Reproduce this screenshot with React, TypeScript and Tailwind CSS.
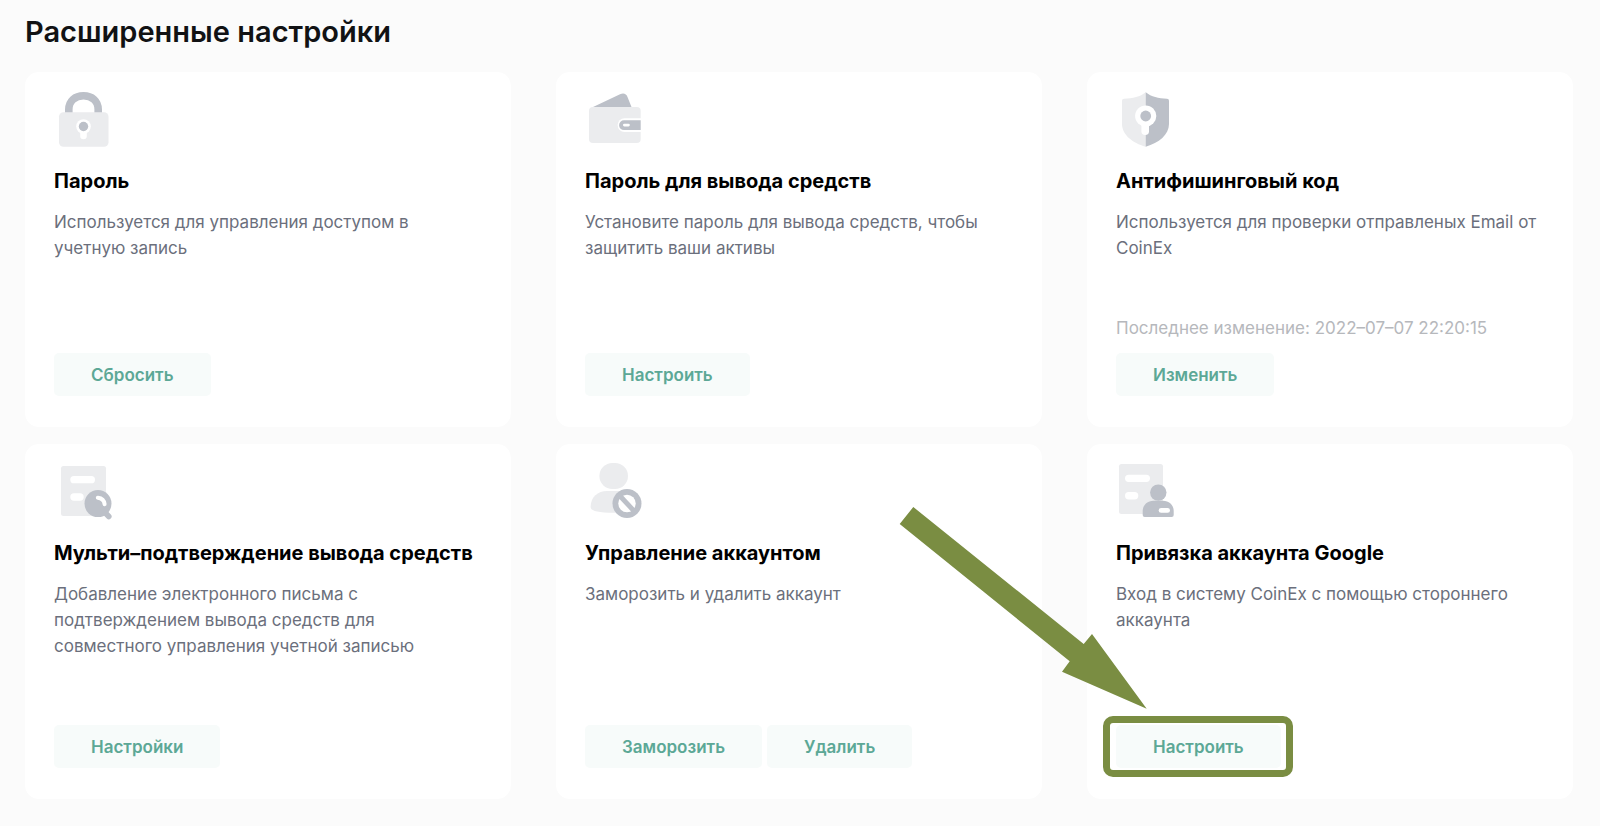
import type { ReactNode } from 'react';

type SettingCard = {
  title: string;
  description: string;
  note?: string;
  icon: ReactNode;
  actions: string[];
  highlighted?: boolean;
};

const DARK = '#bcc0c8';
const LIGHT = '#ebecee';

function Icon({ children }: { children: ReactNode }) {
  return (
    <svg className="size-[60px] shrink-0" viewBox="0 0 60 60" fill="none" aria-hidden="true">
      {children}
    </svg>
  );
}

const LockIcon = (
  <Icon>
    <path d="M14.8 24V19.5C14.8 11 21 5.8 29.5 5.8S44.2 11 44.2 19.5V24" stroke={DARK} strokeWidth="7.6" />
    <rect x="5" y="22.3" width="49.5" height="34.5" rx="4.5" fill={LIGHT} />
    <circle cx="29.5" cy="36.5" r="7.3" fill="#fff" />
    <path d="M29.5 40v6" stroke="#fff" strokeWidth="6.6" strokeLinecap="round" />
    <circle cx="29.5" cy="36.5" r="4.7" fill={DARK} />
  </Icon>
);

const WalletIcon = (
  <Icon>
    <path d="M7 17.5L35 4.3C38.4 2.8 41.4 3.6 42.6 7.2L46.7 17.5Z" fill={DARK} />
    <rect x="4" y="17" width="51.7" height="36" rx="4" fill={LIGHT} />
    <path d="M56 28.2H39.5a6.9 6.9 0 0 0 0 13.8H56Z" fill="#fff" />
    <path d="M55.7 30.3H39a4.9 4.9 0 0 0 0 9.8H55.7Z" fill={DARK} />
    <rect x="38" y="33.8" width="6.8" height="2.6" rx="1.3" fill="#fff" />
  </Icon>
);

const ShieldIcon = (
  <Icon>
    <path d="M29.7 2.3C24 7 17 8.4 8 8.7Q6 8.8 6 10.8V34C6 44.5 16.5 53 29.7 56.7Z" fill={LIGHT} />
    <path d="M29.7 2.3C35.4 7 42.4 8.4 51 8.7Q53 8.8 53 10.8V34C53 44.5 43 53 29.7 56.7Z" fill={DARK} />
    <circle cx="29.7" cy="26" r="10.6" fill="#fff" />
    <path d="M29.2 34v7.2" stroke="#fff" strokeWidth="7.6" strokeLinecap="round" />
    <circle cx="29.7" cy="26" r="5.4" fill={DARK} />
  </Icon>
);

const DocumentSearchIcon = (
  <Icon>
    <rect x="7" y="4" width="45" height="50" rx="2.5" fill={LIGHT} />
    <rect x="16.3" y="14" width="24.7" height="7.3" rx="3.65" fill="#fff" />
    <rect x="16.3" y="31.3" width="13.4" height="7.4" rx="3.7" fill="#fff" />
    <path d="M51 50.5l3.8 4" stroke={DARK} strokeWidth="5.6" strokeLinecap="round" />
    <circle cx="44" cy="41.6" r="13.5" fill={DARK} />
    <path d="M43.8 35.8Q50 36.5 50.6 42.3" stroke="#fff" strokeWidth="4" strokeLinecap="round" />
  </Icon>
);

const UserBlockedIcon = (
  <Icon>
    <rect x="14.4" y="1" width="28.6" height="26" rx="13" fill={LIGHT} />
    <path d="M5.6 45C5.6 35 13 29 22 29H34C43 29 51 35 51 45C51 49 44 50.7 28.5 50.7S5.6 49 5.6 45Z" fill={LIGHT} />
    <circle cx="42" cy="41.5" r="14.5" fill={DARK} />
    <circle cx="42" cy="41.5" r="8.7" fill="#fff" />
    <path d="M35.5 34.5L48.5 48.5" stroke={DARK} strokeWidth="4.8" />
  </Icon>
);

const DocumentUserIcon = (
  <Icon>
    <rect x="3" y="2" width="44" height="50" rx="2.5" fill={LIGHT} />
    <rect x="9" y="12.7" width="25" height="7.3" rx="3.65" fill="#fff" />
    <rect x="9" y="30" width="13.3" height="7.4" rx="3.7" fill="#fff" />
    <circle cx="42.3" cy="30.6" r="8.2" fill={DARK} />
    <path d="M26.7 53V49C26.7 43 31.5 38.7 37.5 38.7H47C53 38.7 57.7 43 57.7 49V53Q57.7 55 55.7 55H28.7Q26.7 55 26.7 53Z" fill={DARK} />
    <rect x="42.7" y="46" width="11.3" height="4.8" rx="2.4" fill="#fff" />
  </Icon>
);

const cards: SettingCard[] = [
  {
    title: 'Пароль',
    description: 'Используется для управления доступом в учетную запись',
    icon: LockIcon,
    actions: ['Сбросить'],
  },
  {
    title: 'Пароль для вывода средств',
    description: 'Установите пароль для вывода средств, чтобы защитить ваши активы',
    icon: WalletIcon,
    actions: ['Настроить'],
  },
  {
    title: 'Антифишинговый код',
    description: 'Используется для проверки отправленых Email от CoinEx',
    note: 'Последнее изменение: 2022–07–07 22:20:15',
    icon: ShieldIcon,
    actions: ['Изменить'],
  },
  {
    title: 'Мульти–подтверждение вывода средств',
    description: 'Добавление электронного письма с подтверждением вывода средств для совместного управления учетной записью',
    icon: DocumentSearchIcon,
    actions: ['Настройки'],
  },
  {
    title: 'Управление аккаунтом',
    description: 'Заморозить и удалить аккаунт',
    icon: UserBlockedIcon,
    actions: ['Заморозить', 'Удалить'],
  },
  {
    title: 'Привязка аккаунта Google',
    description: 'Вход в систему CoinEx с помощью стороннего аккаунта',
    icon: DocumentUserIcon,
    actions: ['Настроить'],
    highlighted: true,
  },
];

function Card({ card }: { card: SettingCard }) {
  return (
    <section className="relative flex min-h-[355px] flex-col rounded-[14px] bg-white px-[29px] pt-[18px] pb-[31px]">
      {card.icon}
      <h2 className="mt-[17px] text-[20px] leading-7 font-bold whitespace-nowrap text-black">{card.title}</h2>
      <p className="mt-3.5 max-w-[430px] text-[17px] leading-[26px] text-[#6b6f7c]">{card.description}</p>

      <div className="mt-auto">
        {card.note && <p className="mb-3 text-[17px] leading-[26px] text-[#b6b8bc]">{card.note}</p>}
        <div className="flex gap-[5px]">
          {card.actions.map((action) => (
            <div key={action} className="relative">
              <button className="block h-[43px] rounded-[5px] bg-[#f7fbfa] px-[37px] pt-0.5 text-[17px] font-semibold text-[#5ca896]">
                {action}
              </button>
              {card.highlighted && (
                <span className="pointer-events-none absolute -top-[9px] -right-3 -bottom-[9px] -left-[13px] rounded-[10px] border-[7px] border-[#7a8d42]" />
              )}
            </div>
          ))}
        </div>
      </div>

      {/* arrow pointing at the button */}
      {card.highlighted && (
        <svg
          className="pointer-events-none absolute top-[63px] left-[-188px] h-[202px] w-[248px]"
          viewBox="0 0 248 202"
          aria-hidden="true"
        >
          <path d="M14.3 0L184.7 137L193 127L247.7 201.7L163 164.7L170.7 154.3L0.7 17Z" fill="#7a8d42" />
        </svg>
      )}
    </section>
  );
}

export default function App() {
  return (
    <main className="min-h-screen bg-[#fbfbfb] pt-3 pr-[27px] pb-7 pl-[25px] font-['Inter','Noto_Sans',sans-serif]">
      <h1 className="text-[29px] leading-10 font-semibold text-[#111214]">Расширенные настройки</h1>
      <div className="mt-5 grid grid-cols-3 gap-x-[45px] gap-y-[17px]">
        {cards.map((card) => (
          <Card key={card.title} card={card} />
        ))}
      </div>
    </main>
  );
}
